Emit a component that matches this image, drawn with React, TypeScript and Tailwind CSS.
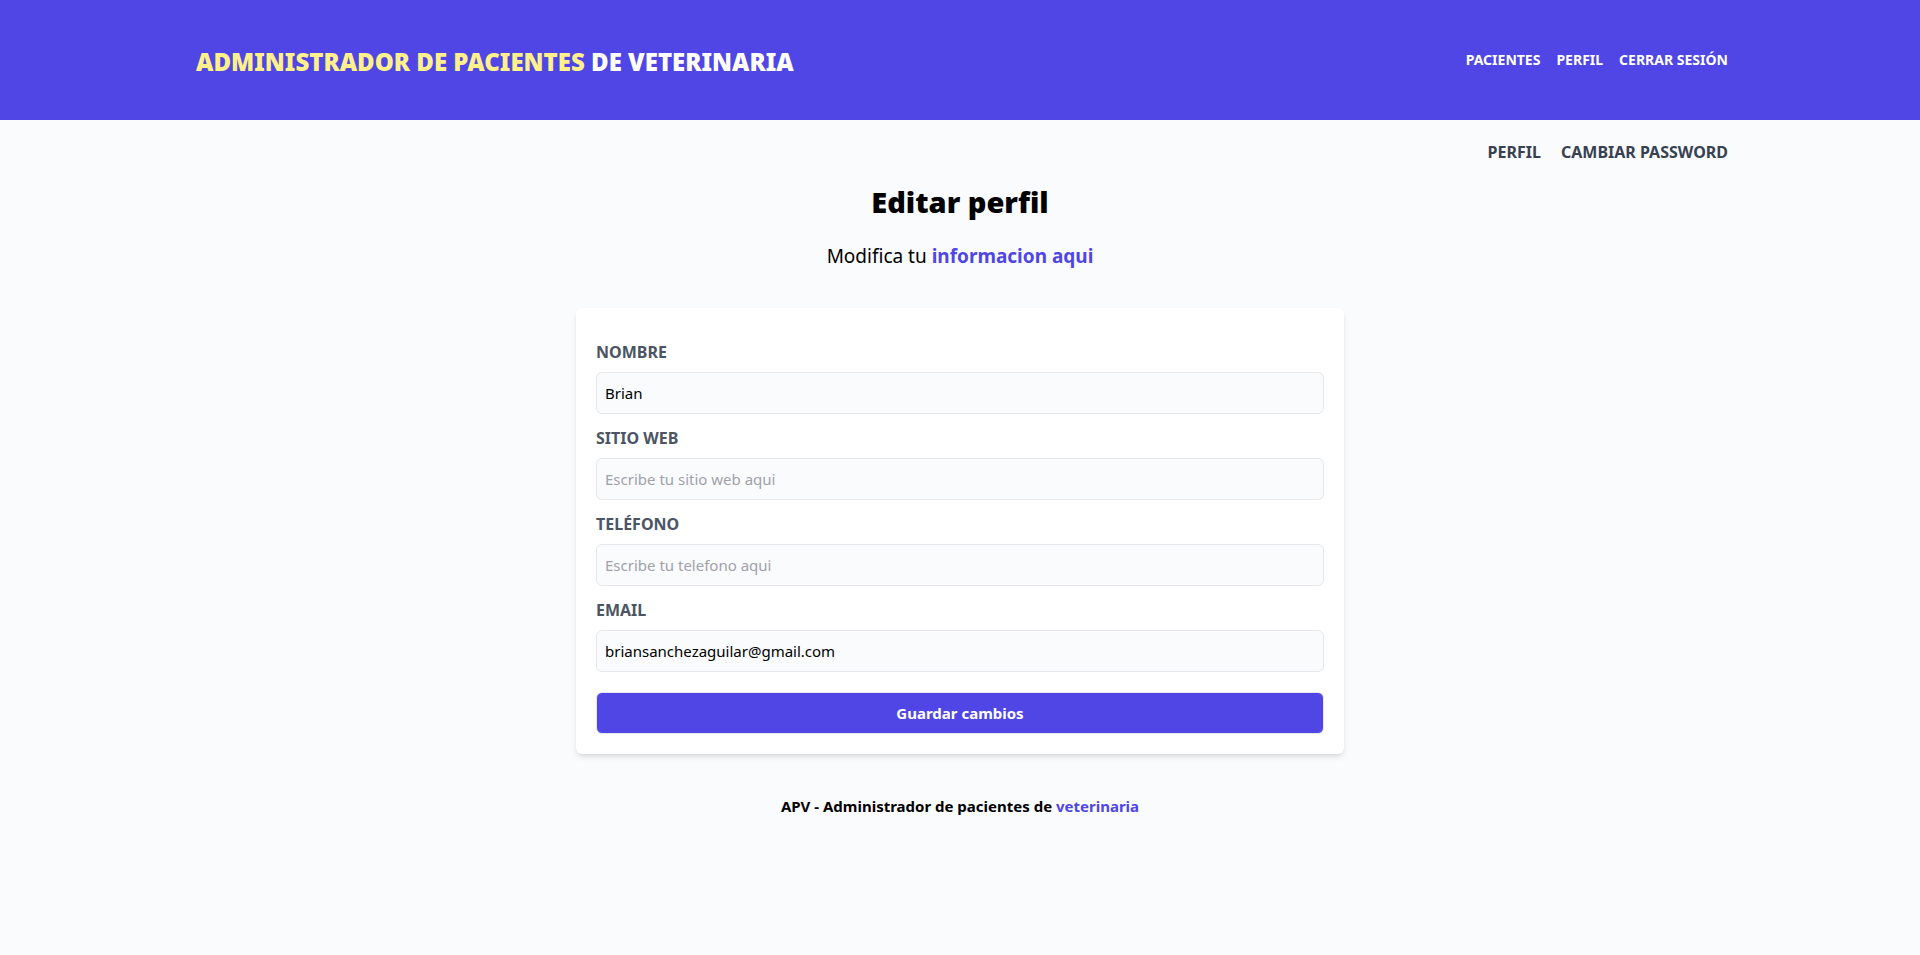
import React from "react";

type Field = { id: string; label: string; type: string; value?: string; placeholder?: string };

const fields: Field[] = [
  { id: "nombre", label: "Nombre", type: "text", value: "Brian" },
  { id: "web", label: "Sitio web", type: "text", placeholder: "Escribe tu sitio web aqui" },
  { id: "telefono", label: "Teléfono", type: "text", placeholder: "Escribe tu telefono aqui" },
  { id: "email", label: "Email", type: "email", value: "briansanchezaguilar@gmail.com" },
];

function Header() {
  return (
    <header className="bg-[#4f46e5] py-10">
      <div className="mx-auto flex max-w-[1536px] items-center justify-between">
        <h1 className="pt-1 pl-1 text-2xl leading-9 font-black uppercase text-[#fef08a]">
          Administrador de pacientes <span className="text-white">de veterinaria</span>
        </h1>
        <nav className="flex gap-4 text-sm font-bold uppercase text-white">
          <a href="#pacientes">Pacientes</a>
          <a href="#perfil">Perfil</a>
          <a href="#salir">Cerrar sesión</a>
        </nav>
      </div>
    </header>
  );
}

export default function App() {
  return (
    <div className="min-h-screen bg-[#fafbfc] font-['Noto_Sans',sans-serif] text-black">
      <Header />
      <main className="mx-auto mt-5 max-w-[1536px]">
        <nav className="flex justify-end gap-5 font-bold uppercase text-[#374151]">
          <a href="#perfil">Perfil</a>
          <a href="#password">Cambiar password</a>
        </nav>
        <h2 className="mt-5 text-center text-[29px] leading-9 font-black">Editar perfil</h2>
        <p className="mt-5 mb-9 text-center text-[19px] leading-8">
          Modifica tu <span className="font-bold text-[#4f46e5]">informacion aqui</span>
        </p>
        <form className="mx-auto w-1/2 rounded-md bg-white p-5 shadow-md" onSubmit={(e) => e.preventDefault()}>
          {fields.map((f) => (
            <div key={f.id} className="my-3">
              <label htmlFor={f.id} className="font-bold uppercase text-[#4b5563]">{f.label}</label>
              <input
                id={f.id}
                type={f.type}
                defaultValue={f.value}
                placeholder={f.placeholder}
                className="mt-2 block w-full rounded-md border border-[#e5e7eb] bg-[#fafbfc] p-2 text-[15px] leading-6 placeholder:text-[#a1a1aa]"
              />
            </div>
          ))}
          <button type="submit" className="mt-5 block w-full rounded-md border border-[#e5e7eb] bg-[#4f46e5] p-2 text-[15px] leading-6 font-bold text-white">
            Guardar cambios
          </button>
        </form>
      </main>
      <footer className="mt-10 text-center text-[15px] leading-6 font-bold">
        APV - Administrador de pacientes de <span className="text-[#4f46e5]">veterinaria</span>
      </footer>
    </div>
  );
}
